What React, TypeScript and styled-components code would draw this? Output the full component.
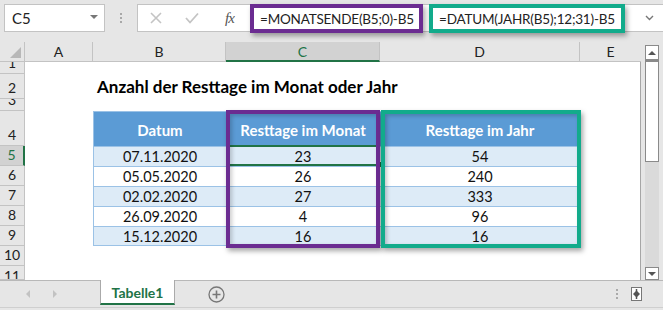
import React from 'react';
import styled, { createGlobalStyle, css } from 'styled-components';

const GREEN = '#217346';
const PURPLE = '#6b2c91';
const TEAL = '#12ab8b';
const BLUE = '#5b9bd5';
const LIGHT = '#ddebf7';
const LINE = '#9bc2e6';
const HEAD_BG = '#e6e6e6';
const HEAD_LINE = '#c3c3c3';

const GlobalStyle = createGlobalStyle`
  html, body { margin: 0; padding: 0; }
  body {
    width: 663px;
    height: 310px;
    overflow: hidden;
    background: ${HEAD_BG};
    font-family: Lato, "Open Sans", sans-serif;
    color: #222;
  }
`;

const Window = styled.div`
  width: 663px;
  height: 310px;
  display: flex;
  flex-direction: column;
`;

/* formula bar */

const FormulaBar = styled.div`
  height: 42px;
  display: flex;
  align-items: flex-start;
  padding: 4px 0 0 4px;
  box-sizing: border-box;
`;

const NameBox = styled.div`
  width: 101px;
  height: 28px;
  box-sizing: border-box;
  background: #fff;
  border: 1px solid ${HEAD_LINE};
  display: flex;
  align-items: center;
  justify-content: space-between;
  padding: 0 6px 0 7px;
  font-size: 15px;
`;

const Caret = styled.span`
  width: 0;
  height: 0;
  border-left: 4px solid transparent;
  border-right: 4px solid transparent;
  border-top: 4px solid #777;
  margin-top: -3px;
`;

const Grip = styled.div`
  width: 32px;
  height: 28px;
  display: flex;
  flex-direction: column;
  align-items: center;
  justify-content: center;
  gap: 2px;
  span {
    width: 2px;
    height: 2px;
    background: #a8a8a8;
  }
`;

const FormulaBox = styled.div`
  flex: 1;
  height: 28px;
  box-sizing: border-box;
  background: #fff;
  border: 1px solid ${HEAD_LINE};
  border-right: none;
  display: flex;
  align-items: center;
`;

const BarButton = styled.div<{ $w: number }>`
  width: ${p => p.$w}px;
  height: 26px;
  display: flex;
  align-items: center;
  justify-content: center;
  color: #666;
`;

const Fx = styled.span`
  font-family: "Liberation Serif", serif;
  font-style: italic;
  font-size: 15px;
  color: #555;
  letter-spacing: -1px;
`;

const Note = styled.div<{ $color: string; $w: number; $gap?: number }>`
  width: ${p => p.$w}px;
  height: 29px;
  margin-top: 1px;
  margin-left: ${p => p.$gap ?? 0}px;
  box-sizing: border-box;
  border: 4px solid ${p => p.$color};
  background: #fff;
  box-shadow: 2px 3px 5px rgba(0, 0, 0, 0.35);
  display: flex;
  align-items: center;
  padding-left: 6px;
  font-size: 13.5px;
  letter-spacing: -0.2px;
  white-space: nowrap;
  overflow: hidden;
  position: relative;
  z-index: 2;
`;

const Chevron = styled.div`
  flex: 1;
  display: flex;
  justify-content: flex-end;
  padding-right: 9px;
`;

/* sheet */

const Main = styled.div`
  height: 238px;
  display: flex;
`;

const Sheet = styled.div`
  width: 641px;
  display: flex;
  flex-direction: column;
`;

const cols = '25px 68px 133px 154px 200px 61px';

const ColHeaders = styled.div`
  height: 20px;
  display: grid;
  grid-template-columns: ${cols};
`;

const ColHead = styled.div<{ $active?: boolean }>`
  box-sizing: border-box;
  border-right: 1px solid ${HEAD_LINE};
  border-bottom: 1px solid ${HEAD_LINE};
  display: flex;
  align-items: center;
  justify-content: center;
  font-size: 14px;
  color: #222;
  &:last-child { border-right: none; }
  ${p =>
    p.$active &&
    css`
      background: #d2d2d2;
      color: ${GREEN};
      border-bottom: 2px solid ${GREEN};
    `}
`;

const Corner = styled.div`
  box-sizing: border-box;
  border-right: 1px solid ${HEAD_LINE};
  border-bottom: 1px solid ${HEAD_LINE};
  display: flex;
  align-items: flex-end;
  justify-content: flex-end;
  padding: 0 3px 3px 0;
`;

const Body = styled.div`
  flex: 1;
  display: grid;
  grid-template-columns: ${cols};
  grid-template-rows: 12px 25px 12px 35px repeat(6, 20px) 14px;
  background: #fff;
  border-right: 1px solid #a6a6a6;
  overflow: hidden;
`;

const RowHead = styled.div<{ $row: number; $active?: boolean; $top?: boolean }>`
  grid-column: 1;
  grid-row: ${p => p.$row};
  background: ${HEAD_BG};
  box-sizing: border-box;
  border-right: 1px solid ${HEAD_LINE};
  border-bottom: 1px solid ${HEAD_LINE};
  display: flex;
  justify-content: center;
  align-items: ${p => (p.$top ? 'flex-start' : 'flex-end')};
  font-size: 14px;
  line-height: 20px;
  overflow: hidden;
  ${p =>
    p.$active &&
    css`
      background: #d2d2d2;
      color: ${GREEN};
      border-right: 2px solid ${GREEN};
    `}
`;

const Title = styled.div`
  grid-column: 3 / span 4;
  grid-row: 2;
  display: flex;
  align-items: center;
  padding-left: 4px;
  font-weight: 700;
  font-size: 17px;
  color: #000;
  white-space: nowrap;
`;

const Cell = styled.div<{ $col: number; $row: number; $head?: boolean; $shade?: boolean }>`
  grid-column: ${p => p.$col};
  grid-row: ${p => p.$row};
  box-sizing: border-box;
  display: flex;
  align-items: center;
  justify-content: center;
  font-size: 14.5px;
  color: #111;
  background: ${p => (p.$head ? BLUE : p.$shade ? LIGHT : '#fff')};
  border-top: 1px solid ${LINE};
  border-left: ${p => (p.$col === 3 ? `1px solid ${LINE}` : 'none')};
  border-bottom: ${p => (p.$row === 9 ? `1px solid ${LINE}` : 'none')};
  ${p =>
    p.$head &&
    css`
      color: #fff;
      font-weight: 700;
      font-size: 15px;
      padding-top: 1px;
    `}
`;

const Selection = styled.div`
  grid-column: 4;
  grid-row: 5;
  margin-top: -1px;
  border-top: 2px solid ${GREEN};
  border-bottom: 2px solid ${GREEN};
  position: relative;
  z-index: 2;
  &::after {
    content: '';
    position: absolute;
    right: -3px;
    bottom: -4px;
    width: 5px;
    height: 5px;
    background: ${GREEN};
    border: 1px solid #fff;
  }
`;

const Frame = styled.div<{ $col: number; $color: string }>`
  grid-column: ${p => p.$col};
  grid-row: 4 / 10;
  margin: -1px ${p => (p.$col === 5 ? '-1px' : '0')} -2px ${p => (p.$col === 5 ? '1px' : '0')};
  border: 4px solid ${p => p.$color};
  box-shadow: 2px 3px 5px rgba(0, 0, 0, 0.35), inset 2px 2px 4px rgba(0, 0, 0, 0.2);
  z-index: 3;
  pointer-events: none;
`;

/* scrollbar */

const ScrollColumn = styled.div`
  width: 22px;
  box-sizing: border-box;
  padding: 3px 4px 0 4px;
  display: flex;
  flex-direction: column;
`;

const ScrollButton = styled.div<{ $h: number }>`
  height: ${p => p.$h}px;
  box-sizing: border-box;
  border: 1px solid #8a8a8a;
  background: #fff;
  display: flex;
  align-items: center;
  justify-content: center;
`;

const Thumb = styled.div`
  height: 102px;
  box-sizing: border-box;
  border: 1px solid #8a8a8a;
  border-top-width: 2px;
  background: #fff;
`;

const Track = styled.div`
  flex: 1;
  background: #dadada;
`;

const Arrow = styled.span<{ $up?: boolean }>`
  width: 0;
  height: 0;
  border-left: 4px solid transparent;
  border-right: 4px solid transparent;
  ${p => (p.$up ? 'border-bottom: 4px solid #555;' : 'border-top: 4px solid #555;')}
`;

/* tab bar */

const TabBar = styled.div`
  height: 28px;
  box-sizing: border-box;
  border-top: 1px solid #b8b8b8;
  border-bottom: 1px solid #cfcfcf;
  display: flex;
  align-items: stretch;
`;

const NavArrows = styled.div`
  width: 100px;
  display: flex;
  align-items: center;
  padding-left: 26px;
  gap: 23px;
  box-sizing: border-box;
`;

const NavArrow = styled.span<{ $right?: boolean }>`
  width: 0;
  height: 0;
  border-top: 4px solid transparent;
  border-bottom: 4px solid transparent;
  ${p => (p.$right ? 'border-left: 4px solid #c2c2c2;' : 'border-right: 4px solid #c2c2c2;')}
`;

const Tab = styled.div`
  width: 75px;
  margin-top: -1px;
  margin-bottom: 2px;
  box-sizing: border-box;
  background: #fff;
  border-left: 1px solid #aaa;
  border-right: 1px solid #aaa;
  border-bottom: 2px solid ${GREEN};
  display: flex;
  align-items: center;
  justify-content: center;
  font-weight: 700;
  font-size: 14px;
  color: ${GREEN};
  padding-top: 2px;
`;

const AddSheet = styled.div`
  width: 82px;
  display: flex;
  align-items: center;
  justify-content: center;
`;

const TabSpacer = styled.div`
  flex: 1;
`;

const StatusTools = styled.div`
  display: flex;
  align-items: center;
  gap: 13px;
  padding-right: 21px;
`;

const rows = [
  { date: '07.11.2020', month: 23, year: 54 },
  { date: '05.05.2020', month: 26, year: 240 },
  { date: '02.02.2020', month: 27, year: 333 },
  { date: '26.09.2020', month: 4, year: 96 },
  { date: '15.12.2020', month: 16, year: 16 },
];

const columns = ['A', 'B', 'C', 'D', 'E'];

const App: React.FC = () => {
  return (
    <Window>
      <GlobalStyle />
      <FormulaBar>
        <NameBox>
          C5
          <Caret />
        </NameBox>
        <Grip>
          <span />
          <span />
          <span />
        </Grip>
        <FormulaBox>
          <BarButton $w={36}>
            <svg width="12" height="12" viewBox="0 0 12 12">
              <path d="M1 1 L11 11 M11 1 L1 11" stroke="#c4c4c4" strokeWidth="1.6" fill="none" />
            </svg>
          </BarButton>
          <BarButton $w={35}>
            <svg width="14" height="12" viewBox="0 0 14 12">
              <path d="M1 6 L5 10.5 L13 1.5" stroke="#c4c4c4" strokeWidth="1.8" fill="none" />
            </svg>
          </BarButton>
          <BarButton $w={41}>
            <Fx>fx</Fx>
          </BarButton>
          <Note $color={PURPLE} $w={173}>=MONATSENDE(B5;0)-B5</Note>
          <Note $color={TEAL} $w={196} $gap={6}>
            =DATUM(JAHR(B5);12;31)-B5
          </Note>
          <Chevron>
            <svg width="9" height="6" viewBox="0 0 9 6">
              <path d="M1 1 L4.5 4.5 L8 1" stroke="#777" strokeWidth="1.4" fill="none" />
            </svg>
          </Chevron>
        </FormulaBox>
      </FormulaBar>

      <Main>
        <Sheet>
          <ColHeaders>
            <Corner>
              <svg width="11" height="11" viewBox="0 0 11 11">
                <path d="M11 0 L11 11 L0 11 Z" fill="#b8b8b8" />
              </svg>
            </Corner>
            {columns.map(c => (
              <ColHead key={c} $active={c === 'C'}>
                {c}
              </ColHead>
            ))}
          </ColHeaders>
          <Body>
            {Array.from({ length: 11 }, (_, i) => (
              <RowHead key={i} $row={i + 1} $active={i + 1 === 5} $top={i + 1 === 11}>
                {i + 1}
              </RowHead>
            ))}
            <Title>Anzahl der Resttage im Monat oder Jahr</Title>
            <Cell $col={3} $row={4} $head>
              Datum
            </Cell>
            <Cell $col={4} $row={4} $head>
              Resttage im Monat
            </Cell>
            <Cell $col={5} $row={4} $head>
              Resttage im Jahr
            </Cell>
            {rows.map((r, i) => (
              <React.Fragment key={r.date}>
                <Cell $col={3} $row={5 + i} $shade={i % 2 === 0}>
                  {r.date}
                </Cell>
                <Cell $col={4} $row={5 + i} $shade={i % 2 === 0}>
                  {r.month}
                </Cell>
                <Cell $col={5} $row={5 + i} $shade={i % 2 === 0}>
                  {r.year}
                </Cell>
              </React.Fragment>
            ))}
            <Selection />
            <Frame $col={4} $color={PURPLE} />
            <Frame $col={5} $color={TEAL} />
          </Body>
        </Sheet>
        <ScrollColumn>
          <ScrollButton $h={15}>
            <Arrow $up />
          </ScrollButton>
          <Thumb />
          <Track />
          <ScrollButton $h={13}>
            <Arrow />
          </ScrollButton>
        </ScrollColumn>
      </Main>

      <TabBar>
        <NavArrows>
          <NavArrow />
          <NavArrow $right />
        </NavArrows>
        <Tab>Tabelle1</Tab>
        <AddSheet>
          <svg width="17" height="17" viewBox="0 0 17 17">
            <circle cx="8.5" cy="8.5" r="7.5" stroke="#777" strokeWidth="1.3" fill="none" />
            <path d="M8.5 4.5 V12.5 M4.5 8.5 H12.5" stroke="#777" strokeWidth="1.6" />
          </svg>
        </AddSheet>
        <TabSpacer />
        <StatusTools>
          <svg width="2" height="10" viewBox="0 0 2 10">
            <rect x="0" y="0" width="2" height="2" fill="#aaa" />
            <rect x="0" y="4" width="2" height="2" fill="#aaa" />
            <rect x="0" y="8" width="2" height="2" fill="#aaa" />
          </svg>
          <svg width="11" height="14" viewBox="0 0 11 14">
            <rect x="0.5" y="0.5" width="10" height="13" fill="#fff" stroke="#777" />
            <path d="M5.5 2 V12" stroke="#555" strokeWidth="1.5" />
            <path d="M2 7 L5.5 3.5 L9 7 L5.5 10.5 Z" fill="#555" />
          </svg>
        </StatusTools>
      </TabBar>
    </Window>
  );
};

export default App;
